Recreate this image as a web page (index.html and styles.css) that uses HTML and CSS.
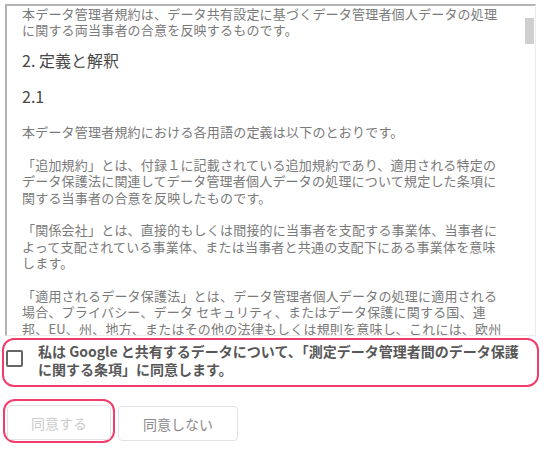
FILE: index.html
```html
<!DOCTYPE html>
<html>
  <head>
    <title>データ管理者規約</title>
    <link rel="stylesheet" href="styles.css">
  </head>

  <body>
    <div class="terms">
      <div class="terms-body">
        <p class="first">本データ管理者規約は、データ共有設定に基づくデータ管理者個人データの処理に関する両当事者の合意を反映するものです。</p>
        <h2>2. 定義と解釈</h2>
        <h3>2.1</h3>
        <p>本データ管理者規約における各用語の定義は以下のとおりです。</p>
        <p>「追加規約」とは、付録１に記載されている追加規約であり、適用される特定のデータ保護法に関連してデータ管理者個人データの処理について規定した条項に関する当事者の合意を反映したものです。</p>
        <p>「関係会社」とは、直接的もしくは間接的に当事者を支配する事業体、当事者によって支配されている事業体、または当事者と共通の支配下にある事業体を意味します。</p>
        <p>「適用されるデータ保護法」とは、データ管理者個人データの処理に適用される場合、プライバシー、データ セキュリティ、またはデータ保護に関する国、連邦、EU、州、地方、またはその他の法律もしくは規則を意味し、これには、欧州</p>
      </div>
      <div class="scroll-thumb"></div>
    </div>

    <label class="consent">
      <span class="checkbox"></span>
      <span class="consent-text">私は Google と共有するデータについて、「測定データ管理者間のデータ保護に関する条項」に同意します。</span>
    </label>

    <div class="actions">
      <span class="highlight">
        <button class="btn" disabled>同意する</button>
      </span>
      <button class="btn btn-decline">同意しない</button>
    </div>
  </body>
</html>
```

FILE: styles.css
```css
body {
  margin: 0;
  font-family: "Noto Sans CJK JP", "Noto Sans", sans-serif;
  background: #fff;
}

.terms {
  position: relative;
  box-sizing: border-box;
  width: 531px;
  height: 332px;
  margin: 4px 0 0 5px;
  border-top: 2px solid #b4b4b4;
  border-left: 2px solid #b4b4b4;
  border-right: 1px solid #ececec;
  border-bottom: 1px solid #ececec;
  overflow: hidden;
}

.terms-body {
  padding: 0 31px 0 15px;
  color: #7a7a7a;
  font-size: 13px;
  letter-spacing: 0.2px;
  line-height: 16.5px;
}

.terms-body p {
  margin: 16px 0 0;
}

.terms-body p.first {
  margin: 0;
  line-height: 16px;
}

.terms-body h2,
.terms-body h3 {
  margin: 10px 0 0;
  color: #474747;
  font-size: 16px;
  font-weight: normal;
  line-height: 24px;
  letter-spacing: 0;
}

.terms-body h3 {
  margin-top: 12px;
}

.scroll-thumb {
  position: absolute;
  top: 12px;
  right: 1px;
  width: 9px;
  height: 26px;
  background: #cfcfcf;
}

.consent {
  display: flex;
  align-items: flex-start;
  gap: 15px;
  box-sizing: border-box;
  width: 537px;
  height: 49px;
  margin: 2px 0 0 2px;
  padding: 2px 16px 0 2px;
  border: 2.5px solid #f13c6c;
  border-radius: 12px;
}

.checkbox {
  flex: none;
  box-sizing: border-box;
  width: 17px;
  height: 17px;
  margin-top: 8px;
  border: 2px solid #666;
  border-radius: 2px;
}

.consent-text {
  color: #575757;
  font-size: 14px;
  font-weight: bold;
  line-height: 18px;
}

.actions {
  display: flex;
  align-items: flex-start;
  gap: 3px;
  margin: 12px 0 0 3px;
}

.highlight {
  display: inline-block;
  padding: 4px 2px 1px 2px;
  border: 2.5px solid #f13c6c;
  border-radius: 12px;
}

.btn {
  box-sizing: border-box;
  height: 35px;
  padding: 0 23px;
  border: 1px solid #e2e2e2;
  border-radius: 4px;
  background: #fff;
  color: #8a8a8a;
  font-family: "Noto Sans CJK JP", "Noto Sans", sans-serif;
  font-size: 14px;
}

.btn:disabled {
  color: #cccccc;
}

.btn-decline {
  margin-top: 7px;
  padding: 0 24px;
}
```
